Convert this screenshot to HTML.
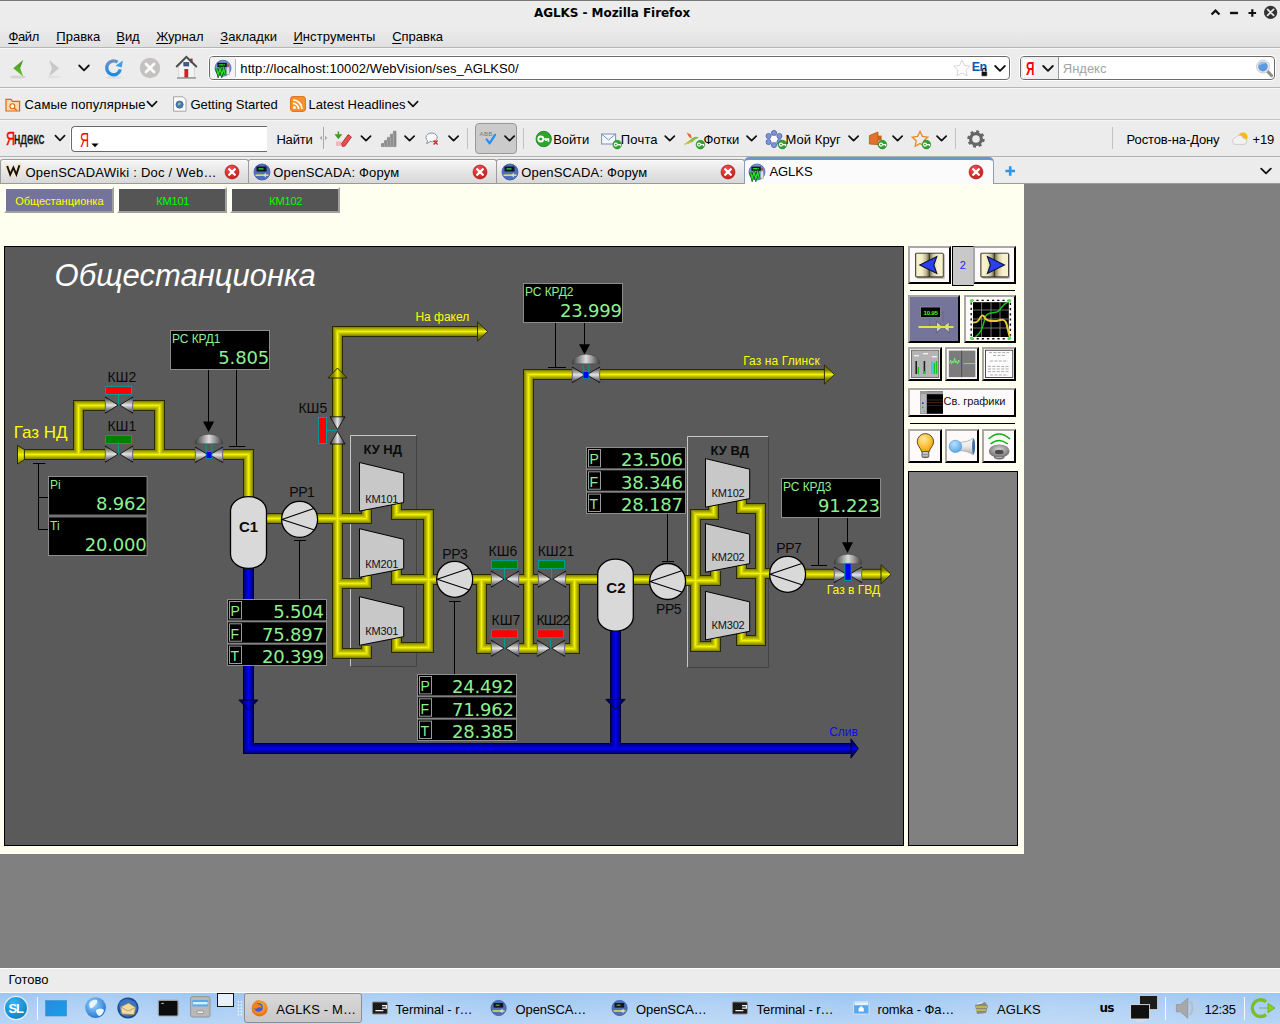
<!DOCTYPE html>
<html lang="ru">
<head>
<meta charset="utf-8">
<title>AGLKS - Mozilla Firefox</title>
<style>
html,body{margin:0;padding:0;}
body{width:1280px;height:1024px;position:relative;overflow:hidden;background:#808080;font-family:"Liberation Sans",sans-serif;font-size:13.33px;color:#000;}
.a{position:absolute;box-sizing:border-box;display:block;}
.t{position:absolute;white-space:nowrap;line-height:1;}
.dv{font-family:"DejaVu Sans","Liberation Sans",sans-serif;}
.dvc{font-family:"DejaVu Sans Condensed","DejaVu Sans",sans-serif;}
u{text-decoration:underline;text-underline-offset:2px;text-decoration-thickness:1px;}
#win{left:0;top:0;width:1280px;height:184px;background:#ececec;}
#titlebar{left:0;top:0;width:1280px;height:48px;background:linear-gradient(#ececec 0,#ececec 26px,#e0e0e0 47px);border-top:1px solid #777;}
.hl{position:absolute;left:0;width:1280px;height:1px;}
.field{position:absolute;box-sizing:border-box;background:#fff;border:1px solid #6a6a6a;border-radius:4px;box-shadow:0 0 0 1px #fff;}
#page{left:0;top:184px;width:1024px;height:670px;background:#fffff0;}
.btn{position:absolute;box-sizing:border-box;border-style:solid;border-width:2px;border-color:#fff #a0a0a0 #a0a0a0 #fff;}
.pbtn{position:absolute;box-sizing:border-box;border-style:solid;border-width:2px;border-color:#a8a8a8 #000 #000 #a8a8a8;background:#fffafa;}
#status{left:0;top:968px;width:1280px;height:24px;background:#ececec;border-top:1px solid #fff;}
#taskbar{left:0;top:992px;width:1280px;height:32px;background:linear-gradient(90deg,rgba(255,255,255,0) 0,rgba(255,255,255,.12) 8%,rgba(255,255,255,0) 16%,rgba(255,255,255,.14) 30%,rgba(255,255,255,0) 40%,rgba(255,255,255,.12) 55%,rgba(255,255,255,0) 66%,rgba(255,255,255,.14) 82%,rgba(255,255,255,0) 100%),linear-gradient(#9dc5f3,#a9cdf4 40%,#b7d5f5);border-top:1px solid #fff;}

</style>
</head>
<body>

<!-- chrome -->
<div id="win" class="a">
<div id="titlebar" class="a"></div>
<span class="t dv" style="left:534.00px;top:7.05px;font-size:12.00px;font-weight:bold;letter-spacing:-0.056px;">AGLKS - Mozilla Firefox</span>
<svg class="a" style="left:1200px;top:0px" width="80" height="26" viewBox="0 0 80 26"><path d="M11.5 14.5 L15.5 10.6 L19.5 14.5" fill="none" stroke="#111" stroke-width="2.2"/><path d="M30 13 h8" stroke="#111" stroke-width="2.4"/><path d="M48.5 13 h7.6 M52.3 9.2 v7.6" stroke="#111" stroke-width="2.2"/><circle cx="70.6" cy="12.4" r="6.6" fill="#333"/><path d="M67.6 9.4 l6 6 M73.6 9.4 l-6 6" stroke="#e8e8e8" stroke-width="1.7" stroke-linecap="round"/></svg>
<span class="t" style="left:8.40px;top:30.00px;font-size:13.00px;letter-spacing:-0.323px;"><u>Ф</u>айл</span>
<span class="t" style="left:56.30px;top:30.00px;font-size:13.00px;letter-spacing:0.016px;"><u>П</u>равка</span>
<span class="t" style="left:116.30px;top:30.00px;font-size:13.00px;letter-spacing:-0.066px;"><u>В</u>ид</span>
<span class="t" style="left:156.20px;top:30.00px;font-size:13.00px;letter-spacing:-0.028px;"><u>Ж</u>урнал</span>
<span class="t" style="left:220.30px;top:30.00px;font-size:13.00px;letter-spacing:0.062px;"><u>З</u>акладки</span>
<span class="t" style="left:293.40px;top:30.00px;font-size:13.00px;letter-spacing:0.094px;"><u>И</u>нструменты</span>
<span class="t" style="left:392.20px;top:30.00px;font-size:13.00px;letter-spacing:-0.017px;"><u>С</u>правка</span>
<div class="hl" style="top:47px;background:#b6b6b6"></div>
<div class="hl" style="top:48px;background:#f6f6f6"></div>
<svg class="a" style="left:0px;top:50px" width="200" height="36" viewBox="0 0 200 36"><defs><linearGradient id="gback" x1="0" y1="0" x2="0" y2="1"><stop offset="0" stop-color="#4a8f34"/><stop offset="1" stop-color="#62c81e"/></linearGradient><linearGradient id="grel" x1="0" y1="0" x2="0" y2="1"><stop offset="0" stop-color="#6a92c6"/><stop offset="1" stop-color="#1c8ae6"/></linearGradient><radialGradient id="gclose" cx="0.4" cy="0.3" r="0.8"><stop offset="0" stop-color="#f05050"/><stop offset="1" stop-color="#c01818"/></radialGradient><radialGradient id="gglobe" cx="0.35" cy="0.3" r="0.8"><stop offset="0" stop-color="#8fd0ff"/><stop offset="1" stop-color="#1a6fd0"/></radialGradient></defs><ellipse cx="18" cy="27" rx="8" ry="1.6" fill="#d4d4d4"/><ellipse cx="54" cy="27" rx="7" ry="1.4" fill="#e2e2e2"/><ellipse cx="114" cy="27.4" rx="8" ry="1.4" fill="#dedede"/><path d="M13.2 18.3 L23.2 9.9 L20.2 18.3 L23.2 26.6 Z" fill="url(#gback)"/><path d="M59.1 18.3 L49 9.9 L51.9 18.3 L49 26.6 Z" fill="#c7c9c5"/><path d="M79.20 15.50 L84.00 20.30 L88.80 15.50" fill="none" stroke="#111" stroke-width="1.8" stroke-linecap="round" stroke-linejoin="round"/><path d="M120.3 19.4 A6.9 6.9 0 1 1 117.6 12.2" fill="none" stroke="url(#grel)" stroke-width="3.4"/><path d="M115.6 15.8 L122.9 10.4 L121.7 17.6 Z" fill="#3aa0ea"/><circle cx="150" cy="18" r="10.2" fill="#c4c1c1"/><path d="M146 14 l8 8 M154 14 l-8 8" stroke="#fafafa" stroke-width="2.8" stroke-linecap="round"/><path d="M178.6 16.4 L186.4 8.4 L194.4 16.4 V27.6 H178.6 Z" fill="#f4f4f4" stroke="#c4c4c4" stroke-width="0.6"/><rect x="190.2" y="8.6" width="2.4" height="4" fill="#a42828"/><path d="M176.2 17 L186.4 6.8 L196.8 17" fill="none" stroke="#4c4c4c" stroke-width="1.9" stroke-linejoin="miter"/><rect x="183.8" y="12.4" width="5" height="3.6" fill="#3c5f90" stroke="#2a3f60" stroke-width="0.6"/><rect x="184.4" y="19" width="3.8" height="8.6" fill="#d81c24"/><path d="M177 28 h19" stroke="#777" stroke-width="1.1"/></svg>
<div class="field" style="left:209px;top:56px;width:801px;height:24px;"></div>
<div class="a" style="left:210px;top:57px;width:25px;height:22px;background:#f3f3f3;border-radius:3px 0 0 3px;"></div>
<svg class="a" style="left:212px;top:58px" width="26" height="20" viewBox="0 0 26 20"><circle cx="11" cy="10.2" r="8" fill="#6f93dc" stroke="#4a68a8" stroke-width="0.8"/><rect x="5.4" y="4.8" width="9.4" height="4.2" fill="#141414"/><rect x="6.8" y="6.2" width="6" height="1.4" fill="#30e030"/><path d="M4.6 10.6 l1.6 6 l1.8 -6 l1.8 6 l1.8 -6 l1.6 6" fill="none" stroke="#0c3a0c" stroke-width="2.6"/><path d="M4.6 10.6 l1.6 6 l1.8 -6 l1.8 6 l1.8 -6 l1.6 6" fill="none" stroke="#22e022" stroke-width="1.5"/><path d="M14.6 11.2 l1.4 -4.6 l1.4 4.6 v5.4 h-2.8z" fill="#e4e4e4" stroke="#8a8a8a" stroke-width="0.4"/><rect x="15.1" y="6.6" width="1.8" height="2" fill="#e02020"/><path d="M23.5 1 v18" stroke="#b8b8b8" stroke-width="1"/></svg>
<span class="t" style="left:240.30px;top:62.00px;font-size:13.00px;letter-spacing:0.099px;">http://localhost:10002/WebVision/ses_AGLKS0/</span>
<span class="t" style="left:971.80px;top:60.82px;font-size:12.50px;color:#0a56b4;font-weight:bold;letter-spacing:-0.600px;">En</span>
<svg class="a" style="left:950px;top:58px" width="60" height="20" viewBox="0 0 60 20"><path d="M12 2.2 l2.5 5.3 5.7 .7 -4.2 3.9 1.1 5.7 -5.1 -2.8 -5.1 2.8 1.1 -5.7 -4.2 -3.9 5.7 -.7z" fill="#fff" stroke="#d6d6d6" stroke-width="1"/><rect x="31.4" y="13.4" width="5.8" height="4.8" rx="0.6" fill="#111" stroke="#ececec" stroke-width="0.5"/><path d="M32.7 13.6 v-1.6 a1.6 1.6 0 0 1 3.2 0 v1.6" fill="none" stroke="#111" stroke-width="1.1"/><path d="M45.20 8.00 L50.00 12.80 L54.80 8.00" fill="none" stroke="#111" stroke-width="1.8" stroke-linecap="round" stroke-linejoin="round"/></svg>
<div class="field" style="left:1020px;top:56px;width:255px;height:24px;"></div>
<div class="a" style="left:1021px;top:57px;width:38px;height:22px;background:#efefef;border-radius:3px 0 0 3px;border-right:1px solid #9a9a9a;"></div>
<svg class="a" style="left:1022px;top:58px" width="40" height="20" viewBox="0 0 40 20"><path d="M1 1 h9 l4 9 l-4 9 h-9 z" fill="#fff"/><path d="M21.20 8.00 L26.00 12.80 L30.80 8.00" fill="none" stroke="#111" stroke-width="1.8" stroke-linecap="round" stroke-linejoin="round"/></svg>
<span class="t" style="left:1026.00px;top:58.52px;font-size:19.00px;color:#f00;font-weight:bold;transform:scaleX(0.62);transform-origin:0 0;">Я</span>
<span class="t" style="left:1062.80px;top:62.00px;font-size:13.00px;color:#a4a4a4;letter-spacing:-0.024px;">Яндекс</span>
<svg class="a" style="left:1254px;top:58px" width="22" height="22" viewBox="0 0 22 22"><path d="M12.6 12.4 l5 5.2" stroke="#8a8f8a" stroke-width="3" stroke-linecap="round"/><circle cx="9" cy="8.6" r="5.6" fill="#5c9ae0" stroke="#e9e9e9" stroke-width="1.6"/><circle cx="9" cy="8.6" r="6.5" fill="none" stroke="#b0b0b0" stroke-width="0.6"/><path d="M5.8 7.2 a3.6 3.6 0 0 1 5 -2" fill="none" stroke="#a9ccf2" stroke-width="1.4"/></svg>
<div class="hl" style="top:87px;background:#b6b6b6"></div>
<div class="hl" style="top:88px;background:#f6f6f6"></div>
<svg class="a" style="left:5px;top:96px" width="16" height="16" viewBox="0 0 16 16"><path d="M1 3.4 h5 l1.4 2 h7.2 v9.6 h-13.6 z" fill="#fbd9b0" stroke="#d2691e" stroke-width="1.2"/><circle cx="7.4" cy="10.2" r="2.4" fill="#fff" stroke="#d2691e" stroke-width="1.1"/><path d="M9.2 12 l2.6 2.4" stroke="#d2691e" stroke-width="1.3"/></svg>
<span class="t" style="left:24.40px;top:97.90px;font-size:13.00px;letter-spacing:0.131px;">Самые популярные</span>
<svg class="a" style="left:145px;top:98px" width="14" height="12" viewBox="0 0 14 12"><path d="M2.40 3.70 L7.00 8.30 L11.60 3.70" fill="none" stroke="#111" stroke-width="1.7" stroke-linecap="round" stroke-linejoin="round"/></svg>
<svg class="a" style="left:172px;top:96px" width="16" height="16" viewBox="0 0 16 16"><path d="M1.6 .8 h9.4 l3 3 v11.4 h-12.4z" fill="#fcfcfc" stroke="#9a9a9a" stroke-width="0.9"/><circle cx="7.6" cy="8.6" r="3.6" fill="#4b79b8" stroke="#35598c" stroke-width="0.7"/><path d="M6 7.4 q1.6 -1.6 3 0 q-1 2 -3 2z" fill="#8fcf6a"/></svg>
<span class="t" style="left:190.40px;top:97.90px;font-size:13.00px;letter-spacing:-0.011px;">Getting Started</span>
<svg class="a" style="left:290px;top:96px" width="16" height="16" viewBox="0 0 16 16"><rect x=".6" y=".6" width="14.8" height="14.8" rx="2.4" fill="#f5922e" stroke="#d9731a" stroke-width="1"/><circle cx="4.4" cy="11.6" r="1.5" fill="#fff"/><path d="M3 7.4 a5.6 5.6 0 0 1 5.6 5.6 M3 4 a9 9 0 0 1 9 9" fill="none" stroke="#fff" stroke-width="1.7"/></svg>
<span class="t" style="left:308.60px;top:97.90px;font-size:13.00px;letter-spacing:-0.003px;">Latest Headlines</span>
<svg class="a" style="left:406.4px;top:98px" width="14" height="12" viewBox="0 0 14 12"><path d="M2.40 3.70 L7.00 8.30 L11.60 3.70" fill="none" stroke="#111" stroke-width="1.7" stroke-linecap="round" stroke-linejoin="round"/></svg>
<div class="hl" style="top:119px;background:#c4c4c4"></div>
<div class="hl" style="top:120px;background:#f4f4f4"></div>
<span class="t" style="left:5.60px;top:129.12px;font-size:19.00px;color:#f00;transform:scaleX(0.66);transform-origin:0 0;-webkit-text-stroke:0.45px #f00;">Я</span>
<span class="t" style="left:14.40px;top:130.47px;font-size:17.40px;color:#111;transform:scaleX(0.66);transform-origin:0 0;-webkit-text-stroke:0.45px #111;">ндекс</span>
<svg class="a" style="left:53px;top:132px" width="14" height="12" viewBox="0 0 14 12"><path d="M2.40 3.70 L7.00 8.30 L11.60 3.70" fill="none" stroke="#111" stroke-width="1.7" stroke-linecap="round" stroke-linejoin="round"/></svg>
<div class="field" style="left:71px;top:126px;height:26px;border-right:none;border-radius:4px 0 0 4px;box-shadow:-1px 0 0 #fff;width:196px"></div>
<span class="t" style="left:79.80px;top:129.22px;font-size:21.00px;color:#f00;transform:scaleX(0.6);transform-origin:0 0;">Я</span>
<svg class="a" style="left:90px;top:140px" width="10" height="8" viewBox="0 0 10 8"><path d="M1.4 3.6 h7.2 l-3.6 3.6z" fill="#000"/></svg>
<span class="t" style="left:276.40px;top:132.80px;font-size:13.00px;letter-spacing:-0.177px;">Найти</span>
<svg class="a" style="left:0px;top:122px" width="1280" height="34" viewBox="0 0 1280 34"><path d="M323.5 5 v22" stroke="#aaa" stroke-width="1"/><path d="M319.6 16 l2.4 -2.2 v4.4z M327.4 16 l-2.4 -2.2 v4.4z" fill="#aaa"/><path d="M338.4 9.6 v4 M336 13 l2.4 3 2.4 -3z" stroke="#4a9a20" stroke-width="1.5" fill="#4a9a20"/><rect x="336" y="19.4" width="5.4" height="4.6" fill="#f6b6c0"/><path d="M341.6 21.6 l6.6 -9 3.2 2.4 -6.4 9 -2.6 .4z" fill="#e45050" stroke="#a82020" stroke-width="0.8"/><path d="M361.40 14.10 L366.00 18.70 L370.60 14.10" fill="none" stroke="#111" stroke-width="1.7" stroke-linecap="round" stroke-linejoin="round"/><path d="M381.4 24.6 v-3 h3 v-3 h3 v-3.2 h3 v-3.2 h3 v-3 h2.6 v15.4z" fill="#8e8e8e" stroke="#7a7a7a" stroke-width="0.6"/><path d="M384.4 21.6 v3 M387.4 18.6 v6 M390.4 15.4 v9.2 M393.4 12.2 v12.4" stroke="#b4b4b4" stroke-width="0.7"/><path d="M405.00 14.10 L409.60 18.70 L414.20 14.10" fill="none" stroke="#111" stroke-width="1.7" stroke-linecap="round" stroke-linejoin="round"/><path d="M426 15.4 a5.6 4.4 0 1 1 4 4.2 l-3.4 2.2 1 -3 a4.6 4.6 0 0 1 -1.6 -3.4z" fill="#f8f8f8" stroke="#8a93a6" stroke-width="1"/><path d="M433.6 18.6 l4 4 M437.6 18.6 l-4 4" stroke="#e02020" stroke-width="1.4"/><path d="M449.00 14.10 L453.60 18.70 L458.20 14.10" fill="none" stroke="#111" stroke-width="1.7" stroke-linecap="round" stroke-linejoin="round"/><path d="M467.5 6 v21" stroke="#c2c2c2" stroke-width="1"/><rect x="475.5" y="1.5" width="41" height="30" rx="3.6" fill="#cbcbcb" stroke="#989898" stroke-width="1"/><path d="M486.6 17.4 l3 4 5.4 -8.6" fill="none" stroke="#1e90ff" stroke-width="2.2" stroke-linecap="round" stroke-linejoin="round"/><path d="M505.00 14.10 L509.60 18.70 L514.20 14.10" fill="none" stroke="#111" stroke-width="1.7" stroke-linecap="round" stroke-linejoin="round"/><path d="M523.5 6 v21" stroke="#c2c2c2" stroke-width="1"/><circle cx="543.7" cy="17" r="7.7" fill="#2fa52f" stroke="#1d7d1d" stroke-width="0.8"/><circle cx="540.8" cy="17" r="2.5" fill="none" stroke="#fff" stroke-width="1.8"/><path d="M543.2 17 h5.2 v2.8 M546 17 v2" fill="none" stroke="#fff" stroke-width="1.7"/><rect x="601.6" y="12" width="14" height="10" fill="#f4f7fc" stroke="#7a8fb8" stroke-width="1"/><path d="M601.6 12 l7 6 7 -6" fill="none" stroke="#7a8fb8" stroke-width="1"/><circle cx="617.2" cy="22.6" r="4.3" fill="#2fa52f" stroke="#1d7d1d" stroke-width="0.6"/><circle cx="615.8" cy="22.6" r="1.5" fill="none" stroke="#fff" stroke-width="1.1"/><path d="M617.2 22.6 h3.2 v1.6" fill="none" stroke="#fff" stroke-width="1.1"/><path d="M665.20 14.10 L669.80 18.70 L674.40 14.10" fill="none" stroke="#111" stroke-width="1.7" stroke-linecap="round" stroke-linejoin="round"/><path d="M684 22.6 l8 -6 q3 -3 7 -1 l-4 2 q-2 3 -6 4z" fill="#7ac043"/><path d="M686.6 10.6 l2.6 4.6 2.6 1.2 -1 -4z" fill="#f26522"/><path d="M684.6 22.4 l7 -3" stroke="#fbb040" stroke-width="1.4"/><circle cx="700.4" cy="22.6" r="4.3" fill="#2fa52f" stroke="#1d7d1d" stroke-width="0.6"/><circle cx="699" cy="22.6" r="1.5" fill="none" stroke="#fff" stroke-width="1.1"/><path d="M700.4 22.6 h3.2 v1.6" fill="none" stroke="#fff" stroke-width="1.1"/><path d="M747.00 14.10 L751.60 18.70 L756.20 14.10" fill="none" stroke="#111" stroke-width="1.7" stroke-linecap="round" stroke-linejoin="round"/><g fill="#7d95d8" stroke="#4a62b0" stroke-width="0.8"><circle cx="774" cy="11" r="2.6"/><circle cx="779.4" cy="14" r="2.6"/><circle cx="779.4" cy="20" r="2.6"/><circle cx="774" cy="23" r="2.6"/><circle cx="768.6" cy="20" r="2.6"/><circle cx="768.6" cy="14" r="2.6"/></g><circle cx="774" cy="17" r="3.2" fill="#fff"/><circle cx="782.4" cy="22.6" r="4.3" fill="#2fa52f" stroke="#1d7d1d" stroke-width="0.6"/><circle cx="781" cy="22.6" r="1.5" fill="none" stroke="#fff" stroke-width="1.1"/><path d="M782.4 22.6 h3.2 v1.6" fill="none" stroke="#fff" stroke-width="1.1"/><path d="M849.00 14.10 L853.60 18.70 L858.20 14.10" fill="none" stroke="#111" stroke-width="1.7" stroke-linecap="round" stroke-linejoin="round"/><path d="M869.4 13.6 l8.6 -3.6 v12.6 l-8.6 -.6z" fill="#e2722a" stroke="#b8541a" stroke-width="0.8"/><rect x="877.6" y="13.6" width="4" height="5" fill="#c8601e"/><circle cx="882.4" cy="22.6" r="4.3" fill="#2fa52f" stroke="#1d7d1d" stroke-width="0.6"/><circle cx="881" cy="22.6" r="1.5" fill="none" stroke="#fff" stroke-width="1.1"/><path d="M882.4 22.6 h3.2 v1.6" fill="none" stroke="#fff" stroke-width="1.1"/><path d="M893.00 14.10 L897.60 18.70 L902.20 14.10" fill="none" stroke="#111" stroke-width="1.7" stroke-linecap="round" stroke-linejoin="round"/><path d="M920 9.4 l2.4 5 5.4 .7 -4 3.7 1 5.4 -4.8 -2.7 -4.8 2.7 1 -5.4 -4 -3.7 5.4 -.7z" fill="none" stroke="#e38a2a" stroke-width="1.3"/><circle cx="926.4" cy="22.6" r="4.3" fill="#2fa52f" stroke="#1d7d1d" stroke-width="0.6"/><circle cx="925" cy="22.6" r="1.5" fill="none" stroke="#fff" stroke-width="1.1"/><path d="M926.4 22.6 h3.2 v1.6" fill="none" stroke="#fff" stroke-width="1.1"/><path d="M937.00 14.10 L941.60 18.70 L946.20 14.10" fill="none" stroke="#111" stroke-width="1.7" stroke-linecap="round" stroke-linejoin="round"/><path d="M955.5 6 v21" stroke="#c2c2c2" stroke-width="1"/><circle cx="976" cy="17" r="5.4" fill="none" stroke="#666" stroke-width="3.2"/><circle cx="976" cy="17" r="7.4" fill="none" stroke="#666" stroke-width="2.6" stroke-dasharray="2.9 2.9"/><path d="M1112.5 5 v22" stroke="#c2c2c2" stroke-width="1"/><circle cx="1243" cy="15" r="4.6" fill="#fbb818"/><path d="M1233 20.4 a3.4 3.4 0 0 1 3 -5 a4 4 0 0 1 7.4 1 a3 3 0 0 1 .6 6 h-9 a2.4 2.4 0 0 1 -2 -2z" fill="#f2f2f2" stroke="#c4c4c4" stroke-width="0.8"/></svg>
<span class="t" style="left:479.60px;top:131.15px;font-size:6.20px;color:#777;letter-spacing:0.200px;">ABB</span>
<span class="t" style="left:553.20px;top:132.80px;font-size:13.00px;letter-spacing:-0.098px;">Войти</span>
<span class="t" style="left:620.80px;top:132.80px;font-size:13.00px;letter-spacing:0.173px;">Почта</span>
<span class="t" style="left:703.40px;top:132.80px;font-size:13.00px;letter-spacing:0.066px;">Фотки</span>
<span class="t" style="left:785.60px;top:132.80px;font-size:13.00px;letter-spacing:0.031px;">Мой Круг</span>
<span class="t" style="left:1126.60px;top:132.80px;font-size:13.00px;letter-spacing:-0.131px;">Ростов-на-Дону</span>
<span class="t" style="left:1252.60px;top:132.80px;font-size:13.00px;letter-spacing:-0.231px;">+19</span>
<div class="hl" style="top:156px;background:#b0b0b0"></div>
<div class="hl" style="top:157px;background:#f0f0f0"></div>
<div class="a" style="left:0px;top:158px;width:1280px;height:26px;background:#ececec;border-bottom:1px solid #9a9a9a;"></div>
<div class="a" style="left:0px;top:159px;width:249px;height:25px;background:linear-gradient(#f6f6f6,#e8e8e8 45%,#d8d8d8);border:1px solid #9c9c9c;border-bottom-color:#9a9a9a;border-radius:3px 3px 0 0;box-shadow:inset 0 1px 0 #fbfbfb;"></div>
<svg class="a" style="left:4px;top:162px" width="20" height="18" viewBox="0 0 20 18"><path d="M3.2 4 l3 8.6 3.2 -7 3 7 3 -9.4" fill="none" stroke="#f6e6c4" stroke-width="4.6" stroke-linejoin="round" stroke-linecap="round"/><path d="M3.2 4 l3 8.6 3.2 -7 3 7 3 -9.4" fill="none" stroke="#111" stroke-width="1.9" stroke-linejoin="miter"/></svg>
<span class="t" style="left:25.40px;top:165.50px;font-size:13.00px;letter-spacing:0.250px;">OpenSCADAWiki : Doc / Web…</span>
<svg class="a" style="left:223px;top:163px" width="18" height="18" viewBox="0 0 18 18"><circle cx="9" cy="9" r="7" fill="url(#gclose)" stroke="#a01818" stroke-width="0.6"/><path d="M6.2 6.2 l5.6 5.6 M11.8 6.2 l-5.6 5.6" stroke="#fff" stroke-width="2.3" stroke-linecap="round"/></svg>
<div class="a" style="left:248px;top:159px;width:249px;height:25px;background:linear-gradient(#f6f6f6,#e8e8e8 45%,#d8d8d8);border:1px solid #9c9c9c;border-bottom-color:#9a9a9a;border-radius:3px 3px 0 0;box-shadow:inset 0 1px 0 #fbfbfb;"></div>
<svg class="a" style="left:252px;top:162px" width="20" height="20" viewBox="0 0 20 20"><circle cx="10" cy="10" r="8" fill="#4d6fc0" stroke="#3a55a0" stroke-width="0.8"/><rect x="4.5" y="4.5" width="10" height="5" fill="#151515"/><rect x="6.5" y="6.2" width="5" height="1.4" fill="#30d030"/><path d="M3.5 13.2 h13" stroke="#e8e040" stroke-width="1.6"/><path d="M11 13.2 l3 -2.4 v4.8 z" fill="#d8d8d8"/></svg>
<span class="t" style="left:273.20px;top:165.50px;font-size:13.00px;letter-spacing:0.179px;">OpenSCADA: Форум</span>
<svg class="a" style="left:471px;top:163px" width="18" height="18" viewBox="0 0 18 18"><circle cx="9" cy="9" r="7" fill="url(#gclose)" stroke="#a01818" stroke-width="0.6"/><path d="M6.2 6.2 l5.6 5.6 M11.8 6.2 l-5.6 5.6" stroke="#fff" stroke-width="2.3" stroke-linecap="round"/></svg>
<div class="a" style="left:496px;top:159px;width:249px;height:25px;background:linear-gradient(#f6f6f6,#e8e8e8 45%,#d8d8d8);border:1px solid #9c9c9c;border-bottom-color:#9a9a9a;border-radius:3px 3px 0 0;box-shadow:inset 0 1px 0 #fbfbfb;"></div>
<svg class="a" style="left:500px;top:162px" width="20" height="20" viewBox="0 0 20 20"><circle cx="10" cy="10" r="8" fill="#4d6fc0" stroke="#3a55a0" stroke-width="0.8"/><rect x="4.5" y="4.5" width="10" height="5" fill="#151515"/><rect x="6.5" y="6.2" width="5" height="1.4" fill="#30d030"/><path d="M3.5 13.2 h13" stroke="#e8e040" stroke-width="1.6"/><path d="M11 13.2 l3 -2.4 v4.8 z" fill="#d8d8d8"/></svg>
<span class="t" style="left:521.20px;top:165.50px;font-size:13.00px;letter-spacing:0.179px;">OpenSCADA: Форум</span>
<svg class="a" style="left:719px;top:163px" width="18" height="18" viewBox="0 0 18 18"><circle cx="9" cy="9" r="7" fill="url(#gclose)" stroke="#a01818" stroke-width="0.6"/><path d="M6.2 6.2 l5.6 5.6 M11.8 6.2 l-5.6 5.6" stroke="#fff" stroke-width="2.3" stroke-linecap="round"/></svg>
<div class="a" style="left:744px;top:157px;width:250px;height:28px;background:#fbfbfb;border:1px solid #8e9db4;border-bottom:none;border-top:3px solid #6d96c8;border-radius:5px 5px 0 0;"></div>
<svg class="a" style="left:747px;top:162px" width="20" height="20" viewBox="0 0 20 20"><circle cx="10" cy="10" r="8" fill="#6f93dc" stroke="#4a68a8" stroke-width="0.8"/><rect x="4.4" y="4.6" width="9.4" height="4.2" fill="#141414"/><rect x="5.8" y="6" width="6" height="1.4" fill="#30e030"/><path d="M3.6 10.4 l1.6 6 l1.8 -6 l1.8 6 l1.8 -6 l1.6 6" fill="none" stroke="#0c3a0c" stroke-width="2.6"/><path d="M3.6 10.4 l1.6 6 l1.8 -6 l1.8 6 l1.8 -6 l1.6 6" fill="none" stroke="#22e022" stroke-width="1.5"/><path d="M13.6 11 l1.4 -4.6 l1.4 4.6 v5.4 h-2.8z" fill="#e4e4e4" stroke="#8a8a8a" stroke-width="0.4"/><rect x="14.1" y="6.4" width="1.8" height="2" fill="#e02020"/></svg>
<span class="t" style="left:769.40px;top:165.00px;font-size:13.00px;letter-spacing:-0.040px;">AGLKS</span>
<svg class="a" style="left:967px;top:163px" width="18" height="18" viewBox="0 0 18 18"><circle cx="9" cy="9" r="7" fill="url(#gclose)" stroke="#a01818" stroke-width="0.6"/><path d="M6.2 6.2 l5.6 5.6 M11.8 6.2 l-5.6 5.6" stroke="#fff" stroke-width="2.3" stroke-linecap="round"/></svg>
<svg class="a" style="left:1002px;top:163px" width="16" height="16" viewBox="0 0 16 16"><path d="M3.4 8 h9.6 M8.2 3.2 v9.6" stroke="#2e96e8" stroke-width="2.6"/></svg>
<svg class="a" style="left:1258px;top:164px" width="16" height="14" viewBox="0 0 16 14"><path d="M3.20 4.60 L8.00 9.40 L12.80 4.60" fill="none" stroke="#111" stroke-width="1.8" stroke-linecap="round" stroke-linejoin="round"/></svg>
</div>
<!-- page -->
<div id="page" class="a"></div>
<div class="btn" style="left:4px;top:187px;width:110px;height:26px;background:#73739b;"></div>
<span class="t" style="left:15.20px;top:195.89px;font-size:11.00px;color:#ffff00;">Общестанционка</span>
<div class="btn" style="left:117px;top:187px;width:110px;height:26px;background:#555;"></div>
<span class="t" style="left:156.30px;top:195.89px;font-size:11.00px;color:#00ff00;letter-spacing:-0.200px;">КМ101</span>
<div class="btn" style="left:230px;top:187px;width:110px;height:26px;background:#555;"></div>
<span class="t" style="left:269.30px;top:195.89px;font-size:11.00px;color:#00ff00;letter-spacing:-0.200px;">КМ102</span>
<!-- scheme -->
<svg class="a" id="scheme" style="left:4px;top:246px" width="900" height="600" viewBox="4 246 900 600" font-family="'Liberation Sans',sans-serif">
<defs>
<linearGradient id="gyh" x1="0" y1="0" x2="0" y2="1"><stop offset="0" stop-color="#7c7c00"/><stop offset="0.5" stop-color="#f2f200"/><stop offset="1" stop-color="#7c7c00"/></linearGradient>
<linearGradient id="gyv" x1="0" y1="0" x2="1" y2="0"><stop offset="0" stop-color="#7c7c00"/><stop offset="0.5" stop-color="#f2f200"/><stop offset="1" stop-color="#7c7c00"/></linearGradient>
<linearGradient id="gbh" x1="0" y1="0" x2="0" y2="1"><stop offset="0" stop-color="#000078"/><stop offset="0.5" stop-color="#0000f4"/><stop offset="1" stop-color="#000078"/></linearGradient>
<linearGradient id="gbv" x1="0" y1="0" x2="1" y2="0"><stop offset="0" stop-color="#000078"/><stop offset="0.5" stop-color="#0000f4"/><stop offset="1" stop-color="#000078"/></linearGradient>
<linearGradient id="gayh" x1="0" y1="0" x2="0" y2="1"><stop offset="0" stop-color="#6a6a00"/><stop offset="0.27" stop-color="#7c7c00"/><stop offset="0.5" stop-color="#f0f000"/><stop offset="0.73" stop-color="#7c7c00"/><stop offset="1" stop-color="#6a6a00"/></linearGradient>
<linearGradient id="gayv" x1="0" y1="0" x2="1" y2="0"><stop offset="0" stop-color="#6a6a00"/><stop offset="0.27" stop-color="#7c7c00"/><stop offset="0.5" stop-color="#f0f000"/><stop offset="0.73" stop-color="#7c7c00"/><stop offset="1" stop-color="#6a6a00"/></linearGradient>
<linearGradient id="gabh" x1="0" y1="0" x2="0" y2="1"><stop offset="0" stop-color="#000060"/><stop offset="0.27" stop-color="#000078"/><stop offset="0.5" stop-color="#0000f0"/><stop offset="0.73" stop-color="#000078"/><stop offset="1" stop-color="#000060"/></linearGradient>
<linearGradient id="gabv" x1="0" y1="0" x2="1" y2="0"><stop offset="0" stop-color="#000060"/><stop offset="0.27" stop-color="#000078"/><stop offset="0.5" stop-color="#0000f0"/><stop offset="0.73" stop-color="#000078"/><stop offset="1" stop-color="#000060"/></linearGradient>
<linearGradient id="gvalve" x1="0" y1="0" x2="0" y2="1"><stop offset="0" stop-color="#2c2c2c"/><stop offset="0.5" stop-color="#e4e4e4"/><stop offset="1" stop-color="#2c2c2c"/></linearGradient>
<linearGradient id="gvalvev" x1="0" y1="0" x2="1" y2="0"><stop offset="0" stop-color="#2c2c2c"/><stop offset="0.5" stop-color="#e4e4e4"/><stop offset="1" stop-color="#2c2c2c"/></linearGradient>
<linearGradient id="gdome" x1="0" y1="0" x2="1" y2="0"><stop offset="0" stop-color="#3c3c3c"/><stop offset="0.5" stop-color="#dcdcdc"/><stop offset="1" stop-color="#3c3c3c"/></linearGradient>
</defs>
<rect x="4.5" y="246.5" width="899" height="599" fill="#5a5a5a" stroke="#000" stroke-width="1"/>
<text x="54.6" y="286.2" font-size="31" fill="#fff" font-style="italic">Общестанционка</text>
<path d="M350.5 666.5 v-231 h66" fill="none" stroke="#c6c6c6" stroke-width="1"/><path d="M350.5 666.5 h66 v-231" fill="none" stroke="#444" stroke-width="1"/>
<path d="M687.5 667.5 v-231 h81" fill="none" stroke="#c6c6c6" stroke-width="1"/><path d="M687.5 667.5 h81 v-231" fill="none" stroke="#444" stroke-width="1"/>
<path d="M22 454.5 L105 454.5" fill="none" stroke="#2a2a00" stroke-width="11" stroke-linejoin="miter"/>
<path d="M133 454.5 L195 454.5" fill="none" stroke="#2a2a00" stroke-width="11" stroke-linejoin="miter"/>
<path d="M223 454.5 L248.5 454.5 L248.5 497" fill="none" stroke="#2a2a00" stroke-width="11" stroke-linejoin="miter"/>
<path d="M78.5 454.5 L78.5 405.5 L105 405.5" fill="none" stroke="#2a2a00" stroke-width="11" stroke-linejoin="miter"/>
<path d="M133 405.5 L159.5 405.5 L159.5 454.5" fill="none" stroke="#2a2a00" stroke-width="11" stroke-linejoin="miter"/>
<path d="M266 518.5 L282 518.5" fill="none" stroke="#2a2a00" stroke-width="11" stroke-linejoin="miter"/>
<path d="M366.5 646 L366.5 653.5 L337.5 653.5 L337.5 444" fill="none" stroke="#2a2a00" stroke-width="11" stroke-linejoin="miter"/>
<path d="M337.5 417 L337.5 331.5 L478 331.5" fill="none" stroke="#2a2a00" stroke-width="11" stroke-linejoin="miter"/>
<path d="M317 518.5 L337.5 518.5" fill="none" stroke="#2a2a00" stroke-width="11" stroke-linejoin="miter"/>
<path d="M337.5 518.5 L366.5 518.5 L366.5 510" fill="none" stroke="#2a2a00" stroke-width="11" stroke-linejoin="miter"/>
<path d="M337.5 583.5 L366.5 583.5 L366.5 576" fill="none" stroke="#2a2a00" stroke-width="11" stroke-linejoin="miter"/>
<path d="M396.5 503 L396.5 514.5 L428.5 514.5 L428.5 647.5 L396.5 647.5 L396.5 636" fill="none" stroke="#2a2a00" stroke-width="11" stroke-linejoin="miter"/>
<path d="M396.5 569 L396.5 579.5 L428.5 579.5" fill="none" stroke="#2a2a00" stroke-width="11" stroke-linejoin="miter"/>
<path d="M428.5 579.5 L437 579.5" fill="none" stroke="#2a2a00" stroke-width="11" stroke-linejoin="miter"/>
<path d="M472 579.5 L491 579.5" fill="none" stroke="#2a2a00" stroke-width="11" stroke-linejoin="miter"/>
<path d="M566 579.5 L598 579.5" fill="none" stroke="#2a2a00" stroke-width="11" stroke-linejoin="miter"/>
<path d="M481.5 579.5 L481.5 648.5 L491 648.5" fill="none" stroke="#2a2a00" stroke-width="11" stroke-linejoin="miter"/>
<path d="M519 648.5 L537 648.5" fill="none" stroke="#2a2a00" stroke-width="11" stroke-linejoin="miter"/>
<path d="M565 648.5 L574.5 648.5 L574.5 579.5" fill="none" stroke="#2a2a00" stroke-width="11" stroke-linejoin="miter"/>
<path d="M528.5 648.5 L528.5 374.5 L572 374.5" fill="none" stroke="#2a2a00" stroke-width="11" stroke-linejoin="miter"/>
<path d="M519 579.5 L528.5 579.5" fill="none" stroke="#2a2a00" stroke-width="11" stroke-linejoin="miter"/>
<path d="M528.5 579.5 L538 579.5" fill="none" stroke="#2a2a00" stroke-width="11" stroke-linejoin="miter"/>
<path d="M600 374.5 L825 374.5" fill="none" stroke="#2a2a00" stroke-width="11" stroke-linejoin="miter"/>
<path d="M633 579.5 L650 579.5" fill="none" stroke="#2a2a00" stroke-width="11" stroke-linejoin="miter"/>
<path d="M713.5 505 L713.5 514.5 L695.5 514.5 L695.5 646.5 L715.5 646.5 L715.5 638" fill="none" stroke="#2a2a00" stroke-width="11" stroke-linejoin="miter"/>
<path d="M685 580.5 L695.5 580.5" fill="none" stroke="#2a2a00" stroke-width="11" stroke-linejoin="miter"/>
<path d="M695.5 580.5 L715.5 580.5 L715.5 571" fill="none" stroke="#2a2a00" stroke-width="11" stroke-linejoin="miter"/>
<path d="M741.5 498 L741.5 508.5 L760.5 508.5 L760.5 640.5 L741.5 640.5 L741.5 630" fill="none" stroke="#2a2a00" stroke-width="11" stroke-linejoin="miter"/>
<path d="M741.5 563 L741.5 573.5 L760.5 573.5" fill="none" stroke="#2a2a00" stroke-width="11" stroke-linejoin="miter"/>
<path d="M760.5 573.5 L770 573.5" fill="none" stroke="#2a2a00" stroke-width="11" stroke-linejoin="miter"/>
<path d="M805 574.3 L834 574.3" fill="none" stroke="#2a2a00" stroke-width="11" stroke-linejoin="miter"/>
<path d="M862 574.3 L882 574.3" fill="none" stroke="#2a2a00" stroke-width="11" stroke-linejoin="miter"/>
<path d="M248.5 568 L248.5 748.5 L852 748.5" fill="none" stroke="#00002e" stroke-width="11" stroke-linejoin="miter"/>
<path d="M615.5 631 L615.5 748.5" fill="none" stroke="#00002e" stroke-width="11" stroke-linejoin="miter"/>

<polygon points="22,459 105,459 105,450 22,450" fill="url(#gyh)"/>
<polygon points="133,459 195,459 195,450 133,450" fill="url(#gyh)"/>
<path d="M223 454.5 L248.5 454.5 L248.5 497" fill="none" stroke="#b4b400" stroke-width="8.4" stroke-linejoin="miter"/><polygon points="223,459 244,459 253,450 223,450" fill="url(#gyh)"/><polygon points="244,459 244,497 253,497 253,450" fill="url(#gyv)"/>
<path d="M78.5 449.5 L78.5 405.5 L105 405.5" fill="none" stroke="#b4b400" stroke-width="8.4" stroke-linejoin="miter"/><polygon points="78.5,454.5 83,450 83,410 74,401 74,450" fill="url(#gyv)"/><polygon points="83,410 105,410 105,401 74,401" fill="url(#gyh)"/>
<path d="M133 405.5 L159.5 405.5 L159.5 449.5" fill="none" stroke="#b4b400" stroke-width="8.4" stroke-linejoin="miter"/><polygon points="133,410 155,410 164,401 133,401" fill="url(#gyh)"/><polygon points="155,410 155,450 159.5,454.5 164,450 164,401" fill="url(#gyv)"/>
<polygon points="266,523 282,523 282,514 266,514" fill="url(#gyh)"/>
<path d="M366.5 646 L366.5 653.5 L337.5 653.5 L337.5 444" fill="none" stroke="#b4b400" stroke-width="8.4" stroke-linejoin="miter"/><polygon points="362,646 362,649 371,658 371,646" fill="url(#gyv)"/><polygon points="362,649 342,649 333,658 371,658" fill="url(#gyh)"/><polygon points="342,649 342,444 333,444 333,658" fill="url(#gyv)"/>
<path d="M337.5 417 L337.5 331.5 L478 331.5" fill="none" stroke="#b4b400" stroke-width="8.4" stroke-linejoin="miter"/><polygon points="342,417 342,336 333,327 333,417" fill="url(#gyv)"/><polygon points="342,336 478,336 478,327 333,327" fill="url(#gyh)"/>
<polygon points="317,523 333,523 337.5,518.5 333,514 317,514" fill="url(#gyh)"/>
<path d="M342.5 518.5 L366.5 518.5 L366.5 510" fill="none" stroke="#b4b400" stroke-width="8.4" stroke-linejoin="miter"/><polygon points="337.5,518.5 342,523 371,523 362,514 342,514" fill="url(#gyh)"/><polygon points="371,523 371,510 362,510 362,514" fill="url(#gyv)"/>
<path d="M342.5 583.5 L366.5 583.5 L366.5 576" fill="none" stroke="#b4b400" stroke-width="8.4" stroke-linejoin="miter"/><polygon points="337.5,583.5 342,588 371,588 362,579 342,579" fill="url(#gyh)"/><polygon points="371,588 371,576 362,576 362,579" fill="url(#gyv)"/>
<path d="M396.5 503 L396.5 514.5 L428.5 514.5 L428.5 647.5 L396.5 647.5 L396.5 636" fill="none" stroke="#b4b400" stroke-width="8.4" stroke-linejoin="miter"/><polygon points="392,503 392,519 401,510 401,503" fill="url(#gyv)"/><polygon points="392,519 424,519 433,510 401,510" fill="url(#gyh)"/><polygon points="424,519 424,643 433,652 433,510" fill="url(#gyv)"/><polygon points="424,643 401,643 392,652 433,652" fill="url(#gyh)"/><polygon points="401,643 401,636 392,636 392,652" fill="url(#gyv)"/>
<path d="M396.5 569 L396.5 579.5 L423.5 579.5" fill="none" stroke="#b4b400" stroke-width="8.4" stroke-linejoin="miter"/><polygon points="392,569 392,584 401,575 401,569" fill="url(#gyv)"/><polygon points="392,584 424,584 428.5,579.5 424,575 401,575" fill="url(#gyh)"/>
<polygon points="428.5,579.5 433,584 437,584 437,575 433,575" fill="url(#gyh)"/>
<polygon points="472,584 491,584 491,575 472,575" fill="url(#gyh)"/>
<polygon points="566,584 598,584 598,575 566,575" fill="url(#gyh)"/>
<path d="M481.5 584.5 L481.5 648.5 L491 648.5" fill="none" stroke="#b4b400" stroke-width="8.4" stroke-linejoin="miter"/><polygon points="481.5,579.5 477,584 477,653 486,644 486,584" fill="url(#gyv)"/><polygon points="477,653 491,653 491,644 486,644" fill="url(#gyh)"/>
<polygon points="519,653 537,653 537,644 519,644" fill="url(#gyh)"/>
<path d="M565 648.5 L574.5 648.5 L574.5 584.5" fill="none" stroke="#b4b400" stroke-width="8.4" stroke-linejoin="miter"/><polygon points="565,653 579,653 570,644 565,644" fill="url(#gyh)"/><polygon points="579,653 579,584 574.5,579.5 570,584 570,644" fill="url(#gyv)"/>
<path d="M528.5 643.5 L528.5 374.5 L572 374.5" fill="none" stroke="#b4b400" stroke-width="8.4" stroke-linejoin="miter"/><polygon points="528.5,648.5 533,644 533,379 524,370 524,644" fill="url(#gyv)"/><polygon points="533,379 572,379 572,370 524,370" fill="url(#gyh)"/>
<polygon points="519,584 524,584 528.5,579.5 524,575 519,575" fill="url(#gyh)"/>
<polygon points="528.5,579.5 533,584 538,584 538,575 533,575" fill="url(#gyh)"/>
<polygon points="600,379 825,379 825,370 600,370" fill="url(#gyh)"/>
<polygon points="633,584 650,584 650,575 633,575" fill="url(#gyh)"/>
<path d="M713.5 505 L713.5 514.5 L695.5 514.5 L695.5 646.5 L715.5 646.5 L715.5 638" fill="none" stroke="#b4b400" stroke-width="8.4" stroke-linejoin="miter"/><polygon points="709,505 709,510 718,519 718,505" fill="url(#gyv)"/><polygon points="709,510 691,510 700,519 718,519" fill="url(#gyh)"/><polygon points="691,510 691,651 700,642 700,519" fill="url(#gyv)"/><polygon points="691,651 720,651 711,642 700,642" fill="url(#gyh)"/><polygon points="720,651 720,638 711,638 711,642" fill="url(#gyv)"/>
<polygon points="685,585 691,585 695.5,580.5 691,576 685,576" fill="url(#gyh)"/>
<path d="M700.5 580.5 L715.5 580.5 L715.5 571" fill="none" stroke="#b4b400" stroke-width="8.4" stroke-linejoin="miter"/><polygon points="695.5,580.5 700,585 720,585 711,576 700,576" fill="url(#gyh)"/><polygon points="720,585 720,571 711,571 711,576" fill="url(#gyv)"/>
<path d="M741.5 498 L741.5 508.5 L760.5 508.5 L760.5 640.5 L741.5 640.5 L741.5 630" fill="none" stroke="#b4b400" stroke-width="8.4" stroke-linejoin="miter"/><polygon points="737,498 737,513 746,504 746,498" fill="url(#gyv)"/><polygon points="737,513 756,513 765,504 746,504" fill="url(#gyh)"/><polygon points="756,513 756,636 765,645 765,504" fill="url(#gyv)"/><polygon points="756,636 746,636 737,645 765,645" fill="url(#gyh)"/><polygon points="746,636 746,630 737,630 737,645" fill="url(#gyv)"/>
<path d="M741.5 563 L741.5 573.5 L755.5 573.5" fill="none" stroke="#b4b400" stroke-width="8.4" stroke-linejoin="miter"/><polygon points="737,563 737,578 746,569 746,563" fill="url(#gyv)"/><polygon points="737,578 756,578 760.5,573.5 756,569 746,569" fill="url(#gyh)"/>
<polygon points="760.5,573.5 765,578 770,578 770,569 765,569" fill="url(#gyh)"/>
<polygon points="805,578.8 834,578.8 834,569.8 805,569.8" fill="url(#gyh)"/>
<polygon points="862,578.8 882,578.8 882,569.8 862,569.8" fill="url(#gyh)"/>
<path d="M248.5 568 L248.5 748.5 L852 748.5" fill="none" stroke="#0000a8" stroke-width="8.4" stroke-linejoin="miter"/><polygon points="244,568 244,753 253,744 253,568" fill="url(#gbv)"/><polygon points="244,753 852,753 852,744 253,744" fill="url(#gbh)"/>
<polygon points="611,631 611,744 615.5,748.5 620,744 620,631" fill="url(#gbv)"/>

<polygon points="487.5,331.5 477.5,321.9 477.5,341.1" fill="url(#gayh)" stroke="#2a2a00" stroke-width="1" stroke-linejoin="miter"/>
<polygon points="834.4,374.5 824.4,364.9 824.4,384.1" fill="url(#gayh)" stroke="#2a2a00" stroke-width="1" stroke-linejoin="miter"/>
<polygon points="891,574.3 881,564.7 881,583.9" fill="url(#gayh)" stroke="#2a2a00" stroke-width="1" stroke-linejoin="miter"/>
<polygon points="337.5,368 327.9,378 347.1,378" fill="url(#gayv)" stroke="#2a2a00" stroke-width="1" stroke-linejoin="miter"/>
<polygon points="858.4,748.5 851,738.9 851,758.1" fill="url(#gabh)" stroke="#00002e" stroke-width="1" stroke-linejoin="miter"/>
<polygon points="248.5,710 238.9,700 258.1,700" fill="url(#gabv)" stroke="#00002e" stroke-width="1" stroke-linejoin="miter"/>
<polygon points="615.5,709.4 605.9,699.4 625.1,699.4" fill="url(#gabv)" stroke="#00002e" stroke-width="1" stroke-linejoin="miter"/>
<polygon points="17.5,445.4 24.4,449.6 24.4,459.6 17.5,464" fill="url(#gyh)" stroke="#2a2a00" stroke-width="1"/>
<path d="M33 463.5 h12.4 M38.5 463.5 V529.5 H48.5 M38.5 497.5 H48.5 M208.5 370 V422 M236.5 370 V446.5 M229 446.5 h16.4 M299.5 540.5 V599 M294 540.5 h12 M454.5 601.5 V674 M449 601.5 h11.6 M555.5 323 V367.5 M548 367.5 h18 M584.5 323 V345 M667.5 514 V561.5 M662 561.5 h12 M818.5 518 V565.5 M811 565.5 h16 M847.5 518 V543 " fill="none" stroke="#000" stroke-width="1"/>
<polygon points="203,421.4 214.2,421.4 208.6,432" fill="#000"/>
<polygon points="579,344.2 590,344.2 584.5,354.4" fill="#000"/>
<polygon points="842,542.2 853,542.2 847.5,553" fill="#000"/>
<rect x="230.5" y="496.6" width="36" height="71.8" rx="18" ry="14.5" fill="#d9d9d9" stroke="#000" stroke-width="1.3"/><text x="239" y="531.9" font-size="15" fill="#0a0a0a" font-weight="bold">C1</text>
<rect x="597.7" y="559.2" width="35.6" height="72" rx="17.8" ry="14.5" fill="#d9d9d9" stroke="#000" stroke-width="1.3"/><text x="606.3" y="592.7" font-size="15" fill="#0a0a0a" font-weight="bold">C2</text>
<circle cx="299.6" cy="519.4" r="18" fill="#d9d9d9" stroke="#000" stroke-width="1.3"/><path d="M313.8 508.6 L282 519.4 L313.8 529.8" fill="none" stroke="#000" stroke-width="1.1"/><text x="289.3" y="496.9" font-size="14" fill="#0a0a0a" letter-spacing="-0.5">PP1</text>
<circle cx="454.7" cy="579.3" r="18" fill="#d9d9d9" stroke="#000" stroke-width="1.3"/><path d="M468.9 568.5 L437.1 579.3 L468.9 589.7" fill="none" stroke="#000" stroke-width="1.1"/><text x="442.3" y="558.5" font-size="14" fill="#0a0a0a" letter-spacing="-0.5">PP3</text>
<circle cx="667.6" cy="581.5" r="18" fill="#d9d9d9" stroke="#000" stroke-width="1.3"/><path d="M681.8 570.7 L650 581.5 L681.8 591.9" fill="none" stroke="#000" stroke-width="1.1"/><text x="656.1" y="613.8" font-size="14" fill="#0a0a0a" letter-spacing="-0.5">PP5</text>
<circle cx="787.6" cy="574.3" r="18" fill="#d9d9d9" stroke="#000" stroke-width="1.3"/><path d="M801.8 563.5 L770 574.3 L801.8 584.7" fill="none" stroke="#000" stroke-width="1.1"/><text x="776.3" y="552.8" font-size="14" fill="#0a0a0a" letter-spacing="-0.5">PP7</text>
<polygon points="359.5,462.5 403.7,473.1 403.7,502.5 359.5,511.1" fill="#c8c8c8" stroke="#000" stroke-width="1"/><text x="365.3" y="502.7" font-size="11" fill="#10101a" letter-spacing="-0.2">КМ101</text>
<polygon points="359.5,528.7 403.7,539.3 403.7,568.7 359.5,577.3" fill="#c8c8c8" stroke="#000" stroke-width="1"/><text x="365.3" y="568" font-size="11" fill="#10101a" letter-spacing="-0.2">КМ201</text>
<polygon points="359.5,596.7 403.7,607.3 403.7,636.7 359.5,645.3" fill="#c8c8c8" stroke="#000" stroke-width="1"/><text x="365.3" y="635.3" font-size="11" fill="#10101a" letter-spacing="-0.2">КМ301</text>
<polygon points="705.5,458.6 749.7,469.2 749.7,498.6 705.5,507.2" fill="#c8c8c8" stroke="#000" stroke-width="1"/><text x="711.6" y="496.9" font-size="11" fill="#10101a" letter-spacing="-0.2">КМ102</text>
<polygon points="705.5,523.6 749.7,534.2 749.7,563.6 705.5,572.2" fill="#c8c8c8" stroke="#000" stroke-width="1"/><text x="711.6" y="561.4" font-size="11" fill="#10101a" letter-spacing="-0.2">КМ202</text>
<polygon points="705.5,591.3 749.7,601.9 749.7,631.3 705.5,639.9" fill="#c8c8c8" stroke="#000" stroke-width="1"/><text x="711.6" y="628.6" font-size="11" fill="#10101a" letter-spacing="-0.2">КМ302</text>
<text x="363.4" y="454.3" font-size="13" fill="#0a0a0a" font-weight="bold">КУ НД</text>
<text x="710.6" y="455.3" font-size="13" fill="#0a0a0a" font-weight="bold">КУ ВД</text>
<rect x="105.5" y="386.5" width="26" height="8" fill="#ff0000" stroke="#009999" stroke-width="1"/><path d="M118.5 395 v10.5" stroke="#009999" stroke-width="1"/><polygon points="105.4,397 118.1,405.1 105.4,413.2" fill="url(#gvalve)" stroke="#111" stroke-width="0.9" stroke-linejoin="miter"/><polygon points="132.6,397 119.9,405.1 132.6,413.2" fill="url(#gvalve)" stroke="#111" stroke-width="0.9" stroke-linejoin="miter"/><path d="M105.5 398.2 v13.8 M132.5 398.2 v13.8" stroke="#777790" stroke-width="0.9"/><text x="107.4" y="382" font-size="14" fill="#0a0a0a">КШ2</text>
<rect x="105.5" y="435.5" width="26" height="8" fill="#008000" stroke="#009999" stroke-width="1"/><path d="M118.5 444 v10.5" stroke="#009999" stroke-width="1"/><polygon points="105.4,446 118.1,454.1 105.4,462.2" fill="url(#gvalve)" stroke="#111" stroke-width="0.9" stroke-linejoin="miter"/><polygon points="132.6,446 119.9,454.1 132.6,462.2" fill="url(#gvalve)" stroke="#111" stroke-width="0.9" stroke-linejoin="miter"/><path d="M105.5 447.2 v13.8 M132.5 447.2 v13.8" stroke="#777790" stroke-width="0.9"/><text x="107.4" y="431" font-size="14" fill="#0a0a0a">КШ1</text>
<rect x="491.5" y="560.5" width="26" height="8" fill="#008000" stroke="#009999" stroke-width="1"/><path d="M504.5 569 v10.5" stroke="#009999" stroke-width="1"/><polygon points="491.4,571 504.1,579.1 491.4,587.2" fill="url(#gvalve)" stroke="#111" stroke-width="0.9" stroke-linejoin="miter"/><polygon points="518.6,571 505.9,579.1 518.6,587.2" fill="url(#gvalve)" stroke="#111" stroke-width="0.9" stroke-linejoin="miter"/><path d="M491.5 572.2 v13.8 M518.5 572.2 v13.8" stroke="#777790" stroke-width="0.9"/><text x="488.6" y="556" font-size="14" fill="#0a0a0a">КШ6</text>
<rect x="538.5" y="560.5" width="26" height="8" fill="#008000" stroke="#009999" stroke-width="1"/><path d="M551.5 569 v10.5" stroke="#009999" stroke-width="1"/><polygon points="538.4,571 551.1,579.1 538.4,587.2" fill="url(#gvalve)" stroke="#111" stroke-width="0.9" stroke-linejoin="miter"/><polygon points="565.6,571 552.9,579.1 565.6,587.2" fill="url(#gvalve)" stroke="#111" stroke-width="0.9" stroke-linejoin="miter"/><path d="M538.5 572.2 v13.8 M565.5 572.2 v13.8" stroke="#777790" stroke-width="0.9"/><text x="537.7" y="556" font-size="14" fill="#0a0a0a">КШ21</text>
<rect x="491.5" y="629.7" width="26" height="8" fill="#ff0000" stroke="#009999" stroke-width="1"/><path d="M504.5 638.2 v10.5" stroke="#009999" stroke-width="1"/><polygon points="491.4,640.2 504.1,648.3 491.4,656.4" fill="url(#gvalve)" stroke="#111" stroke-width="0.9" stroke-linejoin="miter"/><polygon points="518.6,640.2 505.9,648.3 518.6,656.4" fill="url(#gvalve)" stroke="#111" stroke-width="0.9" stroke-linejoin="miter"/><path d="M491.5 641.4 v13.8 M518.5 641.4 v13.8" stroke="#777790" stroke-width="0.9"/><text x="491.6" y="625.2" font-size="14" fill="#0a0a0a">КШ7</text>
<rect x="537.5" y="629.7" width="26" height="8" fill="#ff0000" stroke="#009999" stroke-width="1"/><path d="M550.5 638.2 v10.5" stroke="#009999" stroke-width="1"/><polygon points="537.4,640.2 550.1,648.3 537.4,656.4" fill="url(#gvalve)" stroke="#111" stroke-width="0.9" stroke-linejoin="miter"/><polygon points="564.6,640.2 551.9,648.3 564.6,656.4" fill="url(#gvalve)" stroke="#111" stroke-width="0.9" stroke-linejoin="miter"/><path d="M537.5 641.4 v13.8 M564.5 641.4 v13.8" stroke="#777790" stroke-width="0.9"/><text x="536.6" y="625.2" font-size="14" fill="#0a0a0a" textLength="33.6" lengthAdjust="spacing">КШ22</text>
<rect x="318.5" y="417.5" width="8" height="26" fill="#ff0000" stroke="#009999" stroke-width="1"/>
<path d="M327 430.5 h10.5" stroke="#009999" stroke-width="1"/>
<polygon points="330,416.8 337.5,429.5 345,416.8" fill="url(#gvalvev)" stroke="#111" stroke-width="0.9"/><polygon points="330,444 337.5,431.3 345,444" fill="url(#gvalvev)" stroke="#111" stroke-width="0.9"/>
<text x="298.4" y="412.7" font-size="14" fill="#0a0a0a">КШ5</text>
<path d="M195 443.8 a14 9.6 0 0 1 28 0 z" fill="url(#gdome)" stroke="#444" stroke-width="0.5"/><path d="M206.1 443.6 v9 M211.9 443.6 v9" stroke="#009999" stroke-width="1"/><polygon points="195.4,447 208.1,454.8 195.4,462.6" fill="url(#gvalve)" stroke="#111" stroke-width="0.9" stroke-linejoin="miter"/><polygon points="222.6,447 209.9,454.8 222.6,462.6" fill="url(#gvalve)" stroke="#111" stroke-width="0.9" stroke-linejoin="miter"/><path d="M195.5 448.2 v13.2 M222.5 448.2 v13.2" stroke="#777790" stroke-width="0.9"/><rect x="206.1" y="451.6" width="5.8" height="7" fill="#0000ff" stroke="#009999" stroke-width="0.8"/>
<path d="M572 363.8 a14 9.6 0 0 1 28 0 z" fill="url(#gdome)" stroke="#444" stroke-width="0.5"/><path d="M583.1 363.6 v9 M588.9 363.6 v9" stroke="#009999" stroke-width="1"/><polygon points="572.4,367 585.1,374.8 572.4,382.6" fill="url(#gvalve)" stroke="#111" stroke-width="0.9" stroke-linejoin="miter"/><polygon points="599.6,367 586.9,374.8 599.6,382.6" fill="url(#gvalve)" stroke="#111" stroke-width="0.9" stroke-linejoin="miter"/><path d="M572.5 368.2 v13.2 M599.5 368.2 v13.2" stroke="#777790" stroke-width="0.9"/><rect x="583.1" y="371.6" width="5.8" height="7" fill="#0000ff" stroke="#009999" stroke-width="0.8"/>
<path d="M834 563.8 a14 9.6 0 0 1 28 0 z" fill="url(#gdome)" stroke="#444" stroke-width="0.5"/><polygon points="834.4,567 847.1,574.8 834.4,582.6" fill="url(#gvalve)" stroke="#111" stroke-width="0.9" stroke-linejoin="miter"/><polygon points="861.6,567 848.9,574.8 861.6,582.6" fill="url(#gvalve)" stroke="#111" stroke-width="0.9" stroke-linejoin="miter"/><path d="M834.5 568.2 v13.2 M861.5 568.2 v13.2" stroke="#777790" stroke-width="0.9"/><rect x="844.8" y="563.4" width="6.4" height="17" fill="#0000ff" stroke="#009999" stroke-width="1"/>
<rect x="170.5" y="330.5" width="99" height="39" fill="#000" stroke="#8c8c8c" stroke-width="1"/><text x="172.1" y="343.1" font-size="12" fill="#90ee90" letter-spacing="-0.1">РС КРД1</text><text x="268.9" y="364.4" font-size="18" fill="#90ee90" text-anchor="end" font-family="'DejaVu Sans','Liberation Sans',sans-serif" letter-spacing="-0.2">5.805</text>
<rect x="523.5" y="283.5" width="99" height="39" fill="#000" stroke="#8c8c8c" stroke-width="1"/><text x="525.1" y="296.1" font-size="12" fill="#90ee90" letter-spacing="-0.1">РС КРД2</text><text x="621.9" y="317.4" font-size="18" fill="#90ee90" text-anchor="end" font-family="'DejaVu Sans','Liberation Sans',sans-serif" letter-spacing="-0.2">23.999</text>
<rect x="781.5" y="478.5" width="99" height="39" fill="#000" stroke="#8c8c8c" stroke-width="1"/><text x="783.1" y="491.1" font-size="12" fill="#90ee90" letter-spacing="-0.1">РС КРД3</text><text x="879.9" y="512.4" font-size="18" fill="#90ee90" text-anchor="end" font-family="'DejaVu Sans','Liberation Sans',sans-serif" letter-spacing="-0.2">91.223</text>
<rect x="48.5" y="476.5" width="98.6" height="38.6" fill="#000" stroke="#8c8c8c" stroke-width="1"/><text x="50.1" y="489.1" font-size="12" fill="#90ee90" letter-spacing="-0.1">Pi</text><text x="146.5" y="510.4" font-size="18" fill="#90ee90" text-anchor="end" font-family="'DejaVu Sans','Liberation Sans',sans-serif" letter-spacing="-0.2">8.962</text>
<rect x="48.5" y="516.9" width="98.6" height="38.6" fill="#000" stroke="#8c8c8c" stroke-width="1"/><text x="50.1" y="529.5" font-size="12" fill="#90ee90" letter-spacing="-0.1">Ti</text><text x="146.5" y="550.8" font-size="18" fill="#90ee90" text-anchor="end" font-family="'DejaVu Sans','Liberation Sans',sans-serif" letter-spacing="-0.2">20.000</text>
<rect x="227" y="599" width="100" height="67" fill="#8c8c8c"/><rect x="227.5" y="599.5" width="99" height="21.4" fill="#000" stroke="#8c8c8c" stroke-width="1"/><rect x="229.5" y="601.5" width="12" height="17.4" fill="none" stroke="#9a9a9a" stroke-width="1"/><text x="230.6" y="616.2" font-size="14" fill="#90ee90">P</text><text x="323.8" y="618.3" font-size="18" fill="#90ee90" text-anchor="end" font-family="'DejaVu Sans','Liberation Sans',sans-serif" letter-spacing="-0.2">5.504</text><rect x="227.5" y="621.8" width="99" height="21.4" fill="#000" stroke="#8c8c8c" stroke-width="1"/><rect x="229.5" y="623.8" width="12" height="17.4" fill="none" stroke="#9a9a9a" stroke-width="1"/><text x="230.6" y="638.5" font-size="14" fill="#90ee90">F</text><text x="323.8" y="640.6" font-size="18" fill="#90ee90" text-anchor="end" font-family="'DejaVu Sans','Liberation Sans',sans-serif" letter-spacing="-0.2">75.897</text><rect x="227.5" y="644.1" width="99" height="21.4" fill="#000" stroke="#8c8c8c" stroke-width="1"/><rect x="229.5" y="646.1" width="12" height="17.4" fill="none" stroke="#9a9a9a" stroke-width="1"/><text x="230.6" y="660.8" font-size="14" fill="#90ee90">T</text><text x="323.8" y="662.9" font-size="18" fill="#90ee90" text-anchor="end" font-family="'DejaVu Sans','Liberation Sans',sans-serif" letter-spacing="-0.2">20.399</text>
<rect x="417" y="674" width="100" height="67" fill="#8c8c8c"/><rect x="417.5" y="674.5" width="99" height="21.4" fill="#000" stroke="#8c8c8c" stroke-width="1"/><rect x="419.5" y="676.5" width="12" height="17.4" fill="none" stroke="#9a9a9a" stroke-width="1"/><text x="420.6" y="691.2" font-size="14" fill="#90ee90">P</text><text x="513.8" y="693.3" font-size="18" fill="#90ee90" text-anchor="end" font-family="'DejaVu Sans','Liberation Sans',sans-serif" letter-spacing="-0.2">24.492</text><rect x="417.5" y="696.8" width="99" height="21.4" fill="#000" stroke="#8c8c8c" stroke-width="1"/><rect x="419.5" y="698.8" width="12" height="17.4" fill="none" stroke="#9a9a9a" stroke-width="1"/><text x="420.6" y="713.5" font-size="14" fill="#90ee90">F</text><text x="513.8" y="715.6" font-size="18" fill="#90ee90" text-anchor="end" font-family="'DejaVu Sans','Liberation Sans',sans-serif" letter-spacing="-0.2">71.962</text><rect x="417.5" y="719.1" width="99" height="21.4" fill="#000" stroke="#8c8c8c" stroke-width="1"/><rect x="419.5" y="721.1" width="12" height="17.4" fill="none" stroke="#9a9a9a" stroke-width="1"/><text x="420.6" y="735.8" font-size="14" fill="#90ee90">T</text><text x="513.8" y="737.9" font-size="18" fill="#90ee90" text-anchor="end" font-family="'DejaVu Sans','Liberation Sans',sans-serif" letter-spacing="-0.2">28.385</text>
<rect x="586" y="447" width="100" height="67" fill="#8c8c8c"/><rect x="586.5" y="447.5" width="99" height="21.4" fill="#000" stroke="#8c8c8c" stroke-width="1"/><rect x="588.5" y="449.5" width="12" height="17.4" fill="none" stroke="#9a9a9a" stroke-width="1"/><text x="589.6" y="464.2" font-size="14" fill="#90ee90">P</text><text x="682.8" y="466.3" font-size="18" fill="#90ee90" text-anchor="end" font-family="'DejaVu Sans','Liberation Sans',sans-serif" letter-spacing="-0.2">23.506</text><rect x="586.5" y="469.8" width="99" height="21.4" fill="#000" stroke="#8c8c8c" stroke-width="1"/><rect x="588.5" y="471.8" width="12" height="17.4" fill="none" stroke="#9a9a9a" stroke-width="1"/><text x="589.6" y="486.5" font-size="14" fill="#90ee90">F</text><text x="682.8" y="488.6" font-size="18" fill="#90ee90" text-anchor="end" font-family="'DejaVu Sans','Liberation Sans',sans-serif" letter-spacing="-0.2">38.346</text><rect x="586.5" y="492.1" width="99" height="21.4" fill="#000" stroke="#8c8c8c" stroke-width="1"/><rect x="588.5" y="494.1" width="12" height="17.4" fill="none" stroke="#9a9a9a" stroke-width="1"/><text x="589.6" y="508.8" font-size="14" fill="#90ee90">T</text><text x="682.8" y="510.9" font-size="18" fill="#90ee90" text-anchor="end" font-family="'DejaVu Sans','Liberation Sans',sans-serif" letter-spacing="-0.2">28.187</text>
<text x="13.7" y="438.2" font-size="17" fill="#ffff00">Газ НД</text>
<text x="415.4" y="321" font-size="12" fill="#ffff00">На факел</text>
<text x="743.2" y="365" font-size="12" fill="#ffff00" letter-spacing="0.1">Газ на Глинск</text>
<text x="826.8" y="594" font-size="12" fill="#ffff00">Газ в ГВД</text>
<text x="829.2" y="736" font-size="12" fill="#0a0aff">Слив</text>
</svg>
<!-- panel -->
<div class="pbtn" style="left:908px;top:246px;width:43px;height:38px;"></div>
<div class="pbtn" style="left:973px;top:246px;width:43px;height:38px;"></div>
<div class="a" style="left:952px;top:246px;width:22px;height:40px;background:#c8c8c8;border:1px solid #000;border-right-color:#a8a8a8;"></div>
<span class="t" style="left:959.80px;top:260.49px;font-size:11.00px;color:#2020ff;">2</span>
<div class="a" style="left:910px;top:290px;width:105px;height:1px;background:#000;"></div>
<div class="pbtn" style="left:908px;top:295px;width:52px;height:48px;background:#75759c;"></div>
<div class="pbtn" style="left:964px;top:295px;width:52px;height:48px;"></div>
<div class="pbtn" style="left:908px;top:347px;width:34px;height:34px;"></div>
<div class="pbtn" style="left:945px;top:347px;width:34px;height:34px;"></div>
<div class="pbtn" style="left:982px;top:347px;width:34px;height:34px;"></div>
<div class="pbtn" style="left:908px;top:388px;width:108px;height:29px;"></div>
<span class="t" style="left:943.60px;top:396.49px;font-size:11.00px;color:#101018;letter-spacing:-0.060px;">Св. графики</span>
<div class="a" style="left:910px;top:423px;width:105px;height:1px;background:#000;"></div>
<div class="pbtn" style="left:908px;top:429px;width:34px;height:34px;"></div>
<div class="pbtn" style="left:945px;top:429px;width:34px;height:34px;"></div>
<div class="pbtn" style="left:982px;top:429px;width:34px;height:34px;"></div>
<div class="a" style="left:908px;top:471px;width:110px;height:375px;background:#808080;border:1px solid #000;"></div>
<svg class="a" style="left:904px;top:244px" width="120" height="230" viewBox="904 244 120 230"><defs><linearGradient id="gbookl" x1="0" y1="0" x2="1" y2="0"><stop offset="0" stop-color="#f8f3cc"/><stop offset="0.45" stop-color="#f4efc6"/><stop offset="0.8" stop-color="#b8b088"/><stop offset="1" stop-color="#5a553a"/></linearGradient><linearGradient id="gbookr" x1="0" y1="0" x2="1" y2="0"><stop offset="0" stop-color="#7c7650"/><stop offset="0.3" stop-color="#d8d2a8"/><stop offset="0.6" stop-color="#f6f1ca"/><stop offset="1" stop-color="#f8f3cc"/></linearGradient><radialGradient id="gbulb" cx="0.4" cy="0.3" r="0.75"><stop offset="0" stop-color="#ffe9a0"/><stop offset="0.6" stop-color="#fbbf30"/><stop offset="1" stop-color="#e89a10"/></radialGradient><radialGradient id="gball" cx="0.4" cy="0.3" r="0.8"><stop offset="0" stop-color="#b8e0ff"/><stop offset="1" stop-color="#4aa0e4"/></radialGradient><radialGradient id="gspk" cx="0.5" cy="0.4" r="0.7"><stop offset="0" stop-color="#d8d8d8"/><stop offset="1" stop-color="#5a5a5a"/></radialGradient><linearGradient id="ghorn" x1="0" y1="0" x2="0" y2="1"><stop offset="0" stop-color="#fafafa"/><stop offset="0.5" stop-color="#e8e8e8"/><stop offset="1" stop-color="#a8a8a8"/></linearGradient></defs><g transform="translate(915.2 252.2)"><rect x="1.6" y="1.6" width="28" height="25" rx="1.6" fill="#000" opacity="0.28"/><rect x="0" y="0.6" width="28.4" height="24.6" rx="1.4" fill="#26261a"/><rect x="1" y="1.4" width="13" height="22.8" fill="url(#gbookl)"/><rect x="14.6" y="1.4" width="13" height="22.8" fill="url(#gbookr)"/><path d="M4.6 12.8 L21.6 4.4 L18.6 12.8 L21.6 21.2 Z" fill="#2a40f0" stroke="#0c1030" stroke-width="1.1" stroke-linejoin="miter"/></g><g transform="translate(980.4 252.2)"><rect x="1.6" y="1.6" width="28" height="25" rx="1.6" fill="#000" opacity="0.28"/><rect x="0" y="0.6" width="28.4" height="24.6" rx="1.4" fill="#26261a"/><rect x="1" y="1.4" width="13" height="22.8" fill="url(#gbookl)"/><rect x="14.6" y="1.4" width="13" height="22.8" fill="url(#gbookr)"/><path d="M24 12.8 L7 4.4 L10 12.8 L7 21.2 Z" fill="#2a40f0" stroke="#0c1030" stroke-width="1.1" stroke-linejoin="miter"/></g><path d="M929.7 318 v8 M927.4 325.6 h4.6 M940.6 312.4 h2.6 v10" fill="none" stroke="#6e6e78" stroke-width="1.2"/><rect x="920.4" y="307" width="20.2" height="10.6" fill="#000" stroke="#8c8c9c" stroke-width="0.9"/><polygon points="936.4,321.4 942.8,327 936.4,332.6" fill="#d0d0d0" stroke="#555" stroke-width="0.8"/><polygon points="949.2,321.4 942.8,327 949.2,332.6" fill="#d0d0d0" stroke="#555" stroke-width="0.8"/><path d="M919.2 327 h33.6" stroke="#e8e040" stroke-width="1.9" stroke-linecap="round"/><rect x="971.2" y="300.4" width="39.2" height="38.4" fill="none" stroke="#111" stroke-width="1.4" stroke-dasharray="2.2 3"/><rect x="973" y="302.2" width="35.8" height="34.8" fill="#000"/><path d="M981.6 302.2 v34.8 M991 302.2 v34.8 M1000 302.2 v34.8 M973 310 h35.8 M973 319 h35.8 M973 328 h35.8" stroke="#8c8c8c" stroke-width="0.8" fill="none"/><path d="M975.4 336.6 c6 -3 8 -12 10 -20 c2 -5 8 -3 12.4 -5 c4 -3 6 -9 10.8 -9.6" fill="none" stroke="#18c028" stroke-width="1.5"/><path d="M973 322.6 c4 -.4 5 -1 6 -3 c2 -4 4 -6 6 -1.6 c2 4 8 3 12 3 c4 -1.4 7 -2.6 9 1.4 c1.6 5 2 9 3.6 13.6" fill="none" stroke="#e6c838" stroke-width="2"/><circle cx="971.6" cy="300.6" r="1.7" fill="#50e050"/><circle cx="1009.6" cy="300.6" r="1.7" fill="#50e050"/><circle cx="971.6" cy="338.2" r="1.7" fill="#50e050"/><circle cx="1009.6" cy="338.2" r="1.7" fill="#50e050"/><rect x="911.4" y="350.2" width="27.4" height="27.2" fill="#b4b4b4" stroke="#5a5a5a" stroke-width="0.8"/><path d="M919.4 350.6 v26.6" stroke="#7ec8d0" stroke-width="1"/><path d="M929.6 350.6 v26.6" stroke="#d0a0d8" stroke-width="1"/><rect x="915.4" y="361" width="1.6" height="13" fill="#222"/><rect x="917.6" y="367" width="1.4" height="7" fill="#20c020"/><rect x="923.6" y="361" width="1.6" height="13" fill="#222"/><rect x="924" y="371" width="1.4" height="3" fill="#20c020"/><rect x="931" y="361" width="1.6" height="13" fill="#00e0f0"/><rect x="933.6" y="363" width="1.4" height="11" fill="#20c020"/><rect x="935.8" y="361" width="1.4" height="13" fill="#20c020"/><rect x="914" y="355" width="5" height="1.4" fill="#f0f0f0"/><rect x="923" y="353" width="5" height="1.4" fill="#f0f0f0"/><rect x="932" y="356" width="5" height="1.4" fill="#f0f0f0"/><rect x="948.4" y="350.2" width="27.4" height="27.2" fill="#7c7c7c" stroke="#f0f0f0" stroke-width="0.8"/><path d="M961.6 350.6 v26.6" stroke="#444" stroke-width="0.8"/><path d="M949.6 363 l1 -3 1 4 1 -3 1 2 1 -5 1 5 1 -2 1 3 1 -4 1 2" fill="none" stroke="#70f070" stroke-width="1"/><path d="M963.4 363.6 h11.6" stroke="#70f070" stroke-width="0.9"/><rect x="985.4" y="350.2" width="27.4" height="27.2" fill="#fdfdfd" stroke="#222" stroke-width="0.8"/><path d="M989 352.6 h20 M993 355.4 h12 M990 361 h18 M988 366.4 h22 M988 369 h22 M988 371.6 h22 M990 375 h18" stroke="#888" stroke-width="0.7" stroke-dasharray="3 1.4"/><rect x="920.2" y="391.2" width="22.8" height="22.6" fill="#000"/><rect x="920.2" y="391.2" width="6.6" height="22.6" fill="#b8b8b8"/><rect x="920.2" y="391.2" width="22.8" height="3" fill="#9a9a9a"/><path d="M927 400 h16" stroke="#333" stroke-width="0.8"/><path d="M927 402.6 h16" stroke="#5a2a10" stroke-width="0.8"/><path d="M927 405.6 h16" stroke="#5a105a" stroke-width="0.8"/><rect x="922" y="402.4" width="1.6" height="1.6" fill="#2020ff"/><rect x="922" y="406.6" width="1.6" height="1.6" fill="#20c020"/><rect x="923" y="410.6" width="2.4" height="1.4" fill="#20d0d0"/><path d="M925.4 433.6 a8.2 8.2 0 0 1 8.2 8.2 c0 4 -3.6 6 -4.4 10 h-7.6 c-.8 -4 -4.4 -6 -4.4 -10 a8.2 8.2 0 0 1 8.2 -8.2z" fill="url(#gbulb)" stroke="#3a2a08" stroke-width="0.8"/><rect x="922" y="451.6" width="6.8" height="6" rx="1.4" fill="#d8d8d8" stroke="#333" stroke-width="0.8"/><path d="M922.4 454.2 h6 M922.4 456.2 h6" stroke="#555" stroke-width="0.7"/><path d="M958 442.4 q10 0 15.4 -4.4 v17 q-5.4 -4.4 -15.4 -4.4z" fill="url(#ghorn)" stroke="#909090" stroke-width="0.6"/><ellipse cx="973.6" cy="446.4" rx="1.5" ry="7.6" fill="#3a6ea8"/><circle cx="955.4" cy="446.4" r="6.2" fill="url(#gball)" stroke="#4a90d0" stroke-width="0.6"/><path d="M988.6 439 q10.4 -10 21.4 0" fill="none" stroke="#10b010" stroke-width="1.5"/><path d="M990.6 444 q8.4 -7 17.2 0" fill="none" stroke="#10b010" stroke-width="1.5"/><ellipse cx="999.2" cy="451" rx="10.4" ry="6.6" fill="url(#gspk)"/><ellipse cx="999.2" cy="452" rx="4.4" ry="2.2" fill="#4a4a4a"/><path d="M994 456.4 q5 3.4 10.4 0 v1.6 q-5 3 -10.4 0z" fill="#6a6a6a"/></svg>
<span class="t" style="left:923.60px;top:310.15px;font-size:6.20px;color:#40ff10;font-weight:bold;letter-spacing:-0.300px;">10.95</span>
<!-- bottom -->
<div id="status" class="a"></div>
<span class="t" style="left:8.40px;top:972.80px;font-size:13.00px;letter-spacing:-0.031px;">Готово</span>
<div id="taskbar" class="a"></div>
<div class="a" style="left:244px;top:993px;width:118px;height:30px;background:linear-gradient(#d8d8d8,#c8c8c8);border:1px solid #8e8e8e;border-radius:3px;"></div>
<svg class="a" style="left:0px;top:992px" width="1280" height="32" viewBox="0 0 1280 32"><defs><radialGradient id="gsl" cx="0.4" cy="0.3" r="0.8"><stop offset="0" stop-color="#38b4ec"/><stop offset="1" stop-color="#0c7ac0"/></radialGradient><linearGradient id="gdesk" x1="0" y1="0" x2="1" y2="1"><stop offset="0" stop-color="#2a8ad8"/><stop offset="1" stop-color="#14a0ee"/></linearGradient><radialGradient id="gglb" cx="0.4" cy="0.35" r="0.75"><stop offset="0" stop-color="#9ad8ff"/><stop offset="1" stop-color="#1668cc"/></radialGradient><radialGradient id="gff" cx="0.5" cy="0.4" r="0.7"><stop offset="0" stop-color="#ffd040"/><stop offset="1" stop-color="#e0560c"/></radialGradient></defs><circle cx="16" cy="16" r="11.6" fill="url(#gsl)" stroke="#e8eef4" stroke-width="1.2"/><path d="M37.5 5 v23" stroke="#f4f8ff" stroke-width="1"/><rect x="45.6" y="8.6" width="21" height="15.4" fill="url(#gdesk)" stroke="#3a8ad0" stroke-width="0.6"/><circle cx="95.6" cy="15.6" r="10.4" fill="url(#gglb)"/><path d="M89 12 q3 -5 8 -4 q1 3 -2 5 q-2 4 -5 3z M96 18 q5 -3 8 0 q-1 5 -5 6 q-3 -2 -3 -6z" fill="#eaf6ff"/><circle cx="128" cy="16" r="10.6" fill="#1c4a90"/><path d="M119 12 q6 -9 16 -2 q4 6 0 12 q-8 6 -15 -1z" fill="#3a74c4"/><path d="M120.6 15 l8 -4 7 4.6 -1.6 7 -12 -.6z" fill="#f0dca0" stroke="#a8884a" stroke-width="0.7"/><path d="M120.6 15 l7.4 4 7.6 -3.4" fill="none" stroke="#a8884a" stroke-width="0.7"/><rect x="158.4" y="8.4" width="19.6" height="15.6" rx="1.2" fill="#0c0c0c" stroke="#9a9a9a" stroke-width="1.2"/><path d="M161.4 11.4 h2.4" stroke="#ccc" stroke-width="1"/><rect x="190.6" y="4.6" width="19.4" height="20.4" rx="2" fill="#b8b8b8" stroke="#8a8a8a" stroke-width="0.8"/><rect x="192.4" y="8" width="15.8" height="6.4" fill="#58aaf0"/><rect x="193" y="10" width="14.6" height="2.4" fill="#d8ecff"/><rect x="197" y="19" width="6.6" height="2.6" rx="0.6" fill="#eee" stroke="#777" stroke-width="0.6"/><rect x="217.5" y="1.5" width="16" height="13" fill="#e8f0fa" stroke="#111" stroke-width="1"/><path d="M238.4 9 v15 M241.4 9 v15" stroke="#f0f4fa" stroke-width="1.4" stroke-dasharray="1.6 1.6"/><circle cx="259.6" cy="16.4" r="8" fill="url(#gff)"/><circle cx="258.6" cy="15.4" r="4.4" fill="#4a5ad0"/><path d="M252 14 q2 -6 8 -6 q-3 2 -3 4 q4 0 5 4 q-4 -2 -6 1 q-2 -1 -4 -3z" fill="#f0841c"/><rect x="372.4" y="10" width="15" height="12" rx="1" fill="#1a1a1a" stroke="#8a8a8a" stroke-width="1"/><path d="M382 13.6 h4.4 v2.6 h-4.4 M375.4 18.6 h8" stroke="#f0f0f0" stroke-width="1.2" fill="none"/><circle cx="498.6" cy="16" r="7.6" fill="#5070b8" stroke="#3a55a0" stroke-width="0.8"/><rect x="493.6" y="11" width="9.6" height="4.6" fill="#151515"/><rect x="495.6" y="12.6" width="4" height="1.2" fill="#30d030"/><path d="M492.6 19 h12" stroke="#e8e040" stroke-width="1.5"/><path d="M499.6 19 l3 -2.2 v4.4z" fill="#ddd"/><circle cx="619.6" cy="16" r="7.6" fill="#5070b8" stroke="#3a55a0" stroke-width="0.8"/><rect x="614.6" y="11" width="9.6" height="4.6" fill="#151515"/><rect x="616.6" y="12.6" width="4" height="1.2" fill="#30d030"/><path d="M613.6 19 h12" stroke="#e8e040" stroke-width="1.5"/><path d="M620.6 19 l3 -2.2 v4.4z" fill="#ddd"/><rect x="732.4" y="10" width="15" height="12" rx="1" fill="#1a1a1a" stroke="#8a8a8a" stroke-width="1"/><path d="M742 13.6 h4.4 v2.6 h-4.4 M735.4 18.6 h8" stroke="#f0f0f0" stroke-width="1.2" fill="none"/><rect x="853.6" y="9.6" width="15.4" height="12.4" rx="1" fill="#5aa8ec" stroke="#d8e8fa" stroke-width="0.9"/><rect x="854.4" y="10.2" width="13.8" height="3" fill="#e8f2fc"/><path d="M858.6 19.4 v-3 l2.6 -2.4 2.6 2.4 v3z" fill="#fff"/><path d="M975 13 l10 -3 3 4 -2 7 -9 1z" fill="#8a8a7a"/><path d="M976 15 h11 M976 18 h10" stroke="#e8e040" stroke-width="1.2"/><path d="M977 12 l6 -1.4" stroke="#f0f0f0" stroke-width="1"/><rect x="1139.6" y="3.6" width="18" height="14" fill="#1c1c1c" stroke="#d8d8d8" stroke-width="0.8"/><rect x="1130.6" y="12.6" width="19" height="14.4" fill="#101010" stroke="#e0e0e0" stroke-width="0.9"/><path d="M1136 29 h8" stroke="#ddd" stroke-width="1.4"/><path d="M1165.5 5 v23" stroke="#f4f8ff" stroke-width="1"/><path d="M1176.4 12.6 h4 l7.4 -6.4 v20 l-7.4 -6.4 h-4z" fill="#a8a8a8" stroke="#8a8a8a" stroke-width="0.6"/><path d="M1190 9 q5 7 0 14" fill="none" stroke="#b4bcc8" stroke-width="2"/><path d="M1193.6 7 q6 9 0 18" fill="none" stroke="#c4ccd8" stroke-width="1.6"/><path d="M1244.5 5 v23" stroke="#f4f8ff" stroke-width="1"/><path d="M1266 9.6 a8.4 8.4 0 1 0 0 13" fill="none" stroke="#7ac020" stroke-width="3.4"/><path d="M1259 16 h9 v-4.6 l7 4.6 -7 4.6 v-4.6" fill="#8ad020" stroke="#5a9a10" stroke-width="0.6"/></svg>
<span class="t" style="left:8.60px;top:1002.00px;font-size:13.00px;color:#fff;font-weight:bold;letter-spacing:-1.200px;">SL</span>
<span class="t" style="left:276.20px;top:1002.80px;font-size:13.00px;letter-spacing:0.117px;">AGLKS - M…</span>
<span class="t" style="left:395.40px;top:1002.80px;font-size:13.00px;letter-spacing:-0.085px;">Terminal - r…</span>
<span class="t" style="left:515.50px;top:1002.80px;font-size:13.00px;letter-spacing:-0.107px;">OpenSCA…</span>
<span class="t" style="left:636.00px;top:1002.80px;font-size:13.00px;letter-spacing:-0.107px;">OpenSCA…</span>
<span class="t" style="left:756.60px;top:1002.80px;font-size:13.00px;letter-spacing:-0.085px;">Terminal - r…</span>
<span class="t" style="left:877.40px;top:1002.80px;font-size:13.00px;letter-spacing:-0.080px;">romka - Фа…</span>
<span class="t" style="left:997.00px;top:1002.80px;font-size:13.00px;letter-spacing:0.060px;">AGLKS</span>
<span class="t dv" style="left:1099.40px;top:1002.45px;font-size:12.00px;font-weight:bold;letter-spacing:-0.688px;">us</span>
<span class="t" style="left:1204.40px;top:1002.80px;font-size:13.00px;letter-spacing:-0.237px;">12:35</span>
</body>
</html>
